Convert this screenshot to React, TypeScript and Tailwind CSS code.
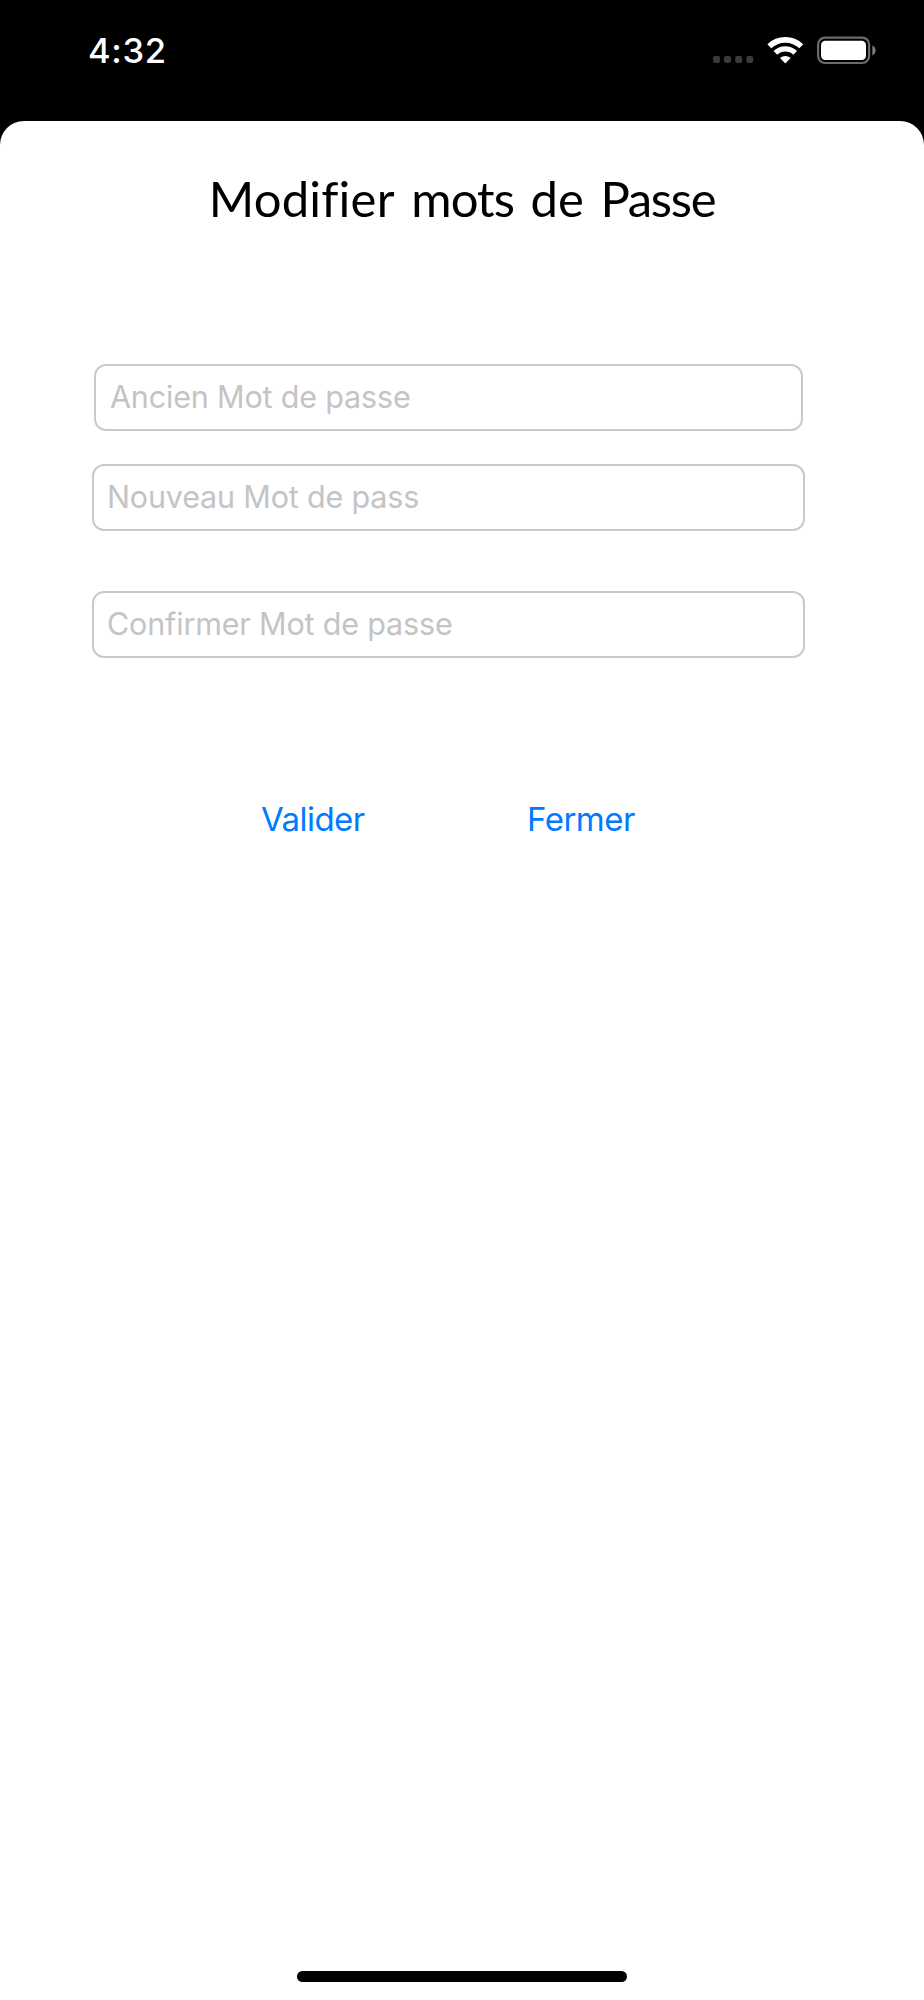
import React from 'react';

function StatusIcons() {
  return (
    <svg width="170" height="34" viewBox="710 33 170 34" aria-hidden="true">
      <g fill="#3a3a3a">
        <rect x="713" y="56" width="7" height="7" rx="2" />
        <rect x="724" y="56" width="7" height="7" rx="2" />
        <rect x="735.2" y="56" width="7" height="7" rx="2" />
        <rect x="746.3" y="56" width="7" height="7" rx="2" />
      </g>
      <g fill="none" stroke="#fff">
        <path d="M769.3 46.3 A23.2 23.2 0 0 1 801.3 46.3" strokeWidth="5.6" />
        <path d="M775.4 52.9 A14.2 14.2 0 0 1 795.2 52.9" strokeWidth="5.4" />
      </g>
      <path d="M785.3 63.6 L780 58 A7.8 7.8 0 0 1 790.6 58 Z" fill="#fff" />
      <rect x="818.1" y="37.6" width="51" height="25.4" rx="7" fill="none" stroke="#6b6b6b" strokeWidth="2.2" />
      <rect x="821" y="40.8" width="45" height="19.2" rx="4.2" fill="#fff" />
      <path d="M872.4 45.6 C876.6 47.6 876.6 53.4 872.4 55.4 Z" fill="#808080" />
    </svg>
  );
}

function Field({ label, className }: { label: string; className: string }) {
  return (
    <input
      aria-label={label}
      placeholder={label}
      className={`block h-[67px] rounded-[12px] border-2 border-[#c9c9cb] bg-white pb-[3px] text-[30.5px] tracking-[-0.17px] text-black outline-none placeholder:text-[#c4c4c6] placeholder:opacity-100 ${className}`}
    />
  );
}

export default function App() {
  return (
    <div className="flex h-[2000px] w-[924px] flex-col bg-black font-['Inter',sans-serif]">
      <header className="flex h-[121px] items-start justify-between pr-[44px] pl-[88px] pt-[33px]">
        <time className="text-[34.5px] leading-[36px] font-medium tracking-[0.7px] text-white">4:32</time>
        <StatusIcons />
      </header>
      <main className="flex flex-1 flex-col rounded-t-[24px] bg-white">
        <h1 className="mt-[47px] text-center font-['Lato',sans-serif] text-[49px] leading-[60px] font-normal [word-spacing:4px] whitespace-nowrap text-black [font-variant-ligatures:none]">
          <span className="tracking-[0.2px]">Modifier</span> <span className="tracking-[-0.9px]">mots</span> de{' '}
          <span className="tracking-[-1.3px]">Passe</span>
        </h1>
        <form className="mt-[136px] flex flex-col">
          <Field label="Ancien Mot de passe" className="ml-[94px] w-[709px] pl-[14px]" />
          <Field label="Nouveau Mot de pass" className="mt-[33px] ml-[92px] w-[713px] pl-[13px]" />
          <Field label="Confirmer Mot de passe" className="mt-[60px] ml-[92px] w-[713px] pl-[13px]" />
          <div className="mt-[141px] flex text-[33px] leading-[40px] text-[#007aff]">
            <button type="button" className="ml-[261px] w-[266px] text-left tracking-[-0.55px]">Valider</button>
            <button type="button" className="text-left tracking-[-0.5px]">Fermer</button>
          </div>
        </form>
        <div className="mx-auto mt-auto mb-[18px] h-[11px] w-[330px] rounded-full bg-black" />
      </main>
    </div>
  );
}
